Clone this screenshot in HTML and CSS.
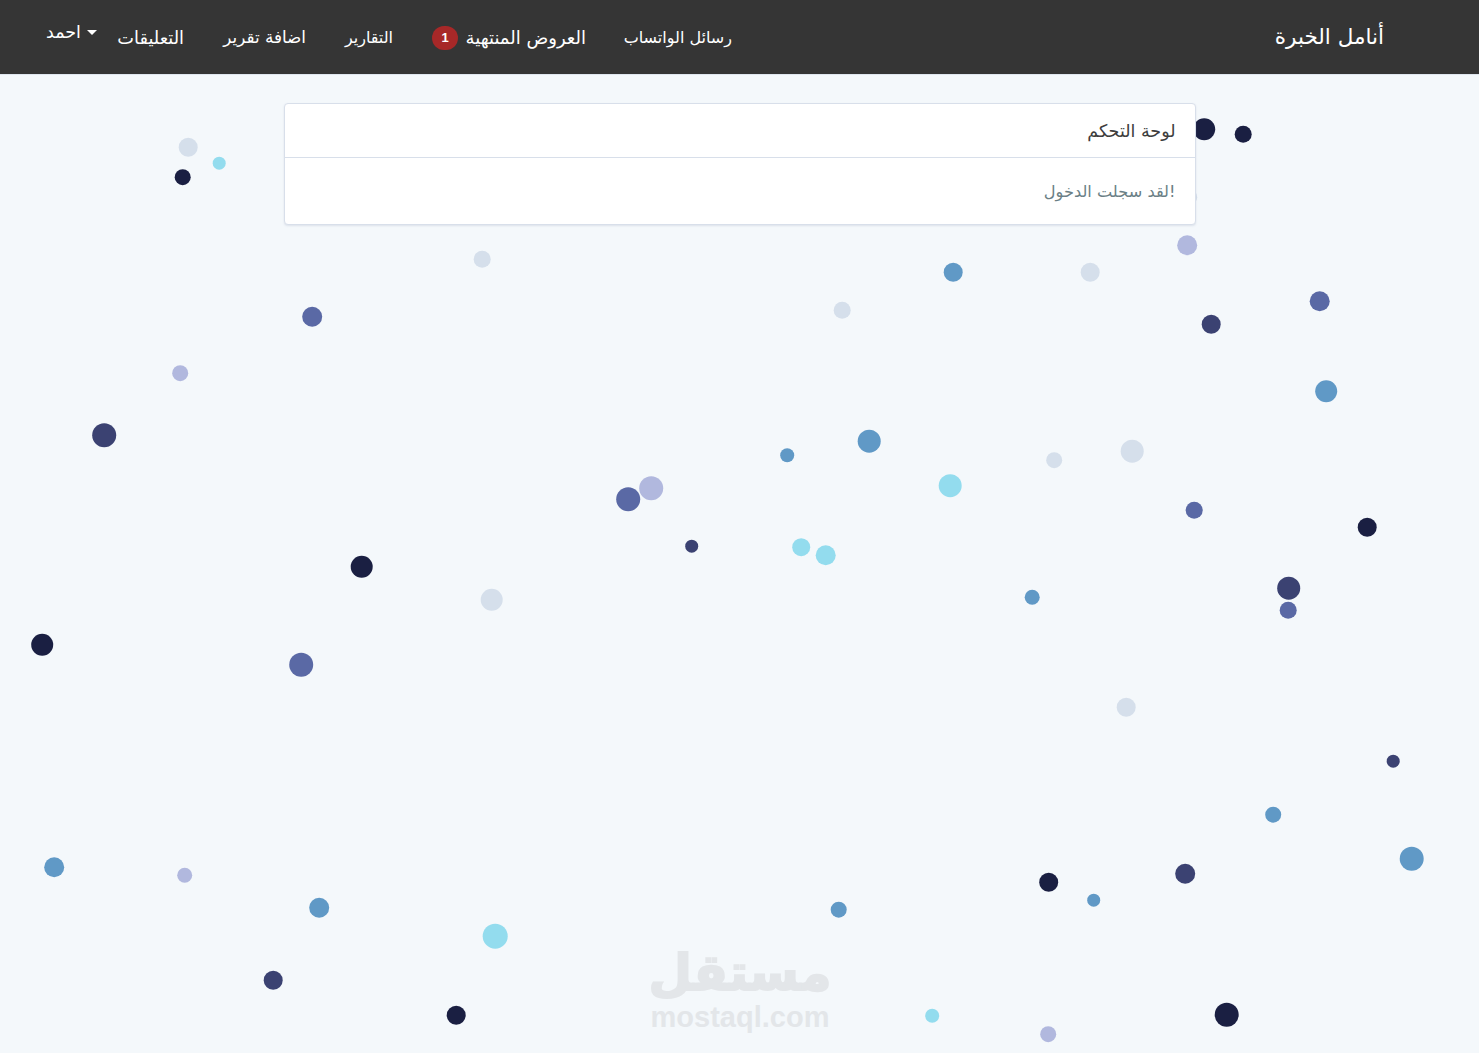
FILE: index.html
```html
<!DOCTYPE html>
<html lang="ar" dir="rtl">
<head>
<meta charset="utf-8">
<title>أنامل الخبرة</title>
<link rel="stylesheet" href="styles.css">
</head>
<body>
<svg class="particles" width="1479" height="1053" viewBox="-0.2 -0.2 1479 1053" aria-hidden="true">
<g class="dark"><circle cx="1204" cy="129" r="11"/><circle cx="1243" cy="134" r="8.5"/><circle cx="182.5" cy="177" r="8"/><circle cx="1367" cy="527" r="9.5"/><circle cx="361.5" cy="566.5" r="11"/><circle cx="42" cy="644.5" r="11"/><circle cx="1048.5" cy="882" r="9.5"/><circle cx="456" cy="1015" r="9.5"/><circle cx="1226.5" cy="1014.5" r="12"/></g>
<g class="navy"><circle cx="1211" cy="324" r="9.5"/><circle cx="104" cy="435" r="12"/><circle cx="691.5" cy="546" r="6.5"/><circle cx="1288.5" cy="588" r="11.5"/><circle cx="1393" cy="761" r="6.5"/><circle cx="1185" cy="873.5" r="10"/><circle cx="273" cy="980" r="9.5"/></g>
<g class="blue"><circle cx="1319.5" cy="301" r="10"/><circle cx="312" cy="316.5" r="10"/><circle cx="628" cy="499" r="12"/><circle cx="1194" cy="510" r="8.5"/><circle cx="1288" cy="610" r="8.5"/><circle cx="301" cy="664.5" r="12"/></g>
<g class="steel"><circle cx="953" cy="272" r="9.5"/><circle cx="1326" cy="391" r="11"/><circle cx="869" cy="441" r="11.5"/><circle cx="787" cy="455" r="7"/><circle cx="1032" cy="597" r="7.5"/><circle cx="1273" cy="814.5" r="8"/><circle cx="1411.5" cy="858.5" r="12"/><circle cx="54" cy="867" r="10"/><circle cx="1093.5" cy="900" r="6.5"/><circle cx="319" cy="907.5" r="10"/><circle cx="838.5" cy="909.5" r="8"/></g>
<g class="cyan"><circle cx="219" cy="163" r="6.5"/><circle cx="950" cy="485.5" r="11.5"/><circle cx="801" cy="547" r="9"/><circle cx="825.5" cy="555" r="10"/><circle cx="495" cy="936" r="12.5"/><circle cx="932" cy="1015.5" r="7"/></g>
<g class="lav"><circle cx="1187" cy="245" r="10"/><circle cx="180" cy="373" r="8"/><circle cx="651" cy="488" r="12"/><circle cx="184.5" cy="875" r="7.5"/><circle cx="1048" cy="1034" r="8"/></g>
<g class="light"><circle cx="188" cy="147" r="9.5"/><circle cx="482" cy="259" r="8.5"/><circle cx="1090" cy="272" r="9.5"/><circle cx="842" cy="310" r="8.5"/><circle cx="1054" cy="460" r="8"/><circle cx="1132" cy="451" r="11.5"/><circle cx="491.5" cy="599.5" r="11"/><circle cx="1126" cy="707" r="9.5"/><circle cx="1189" cy="197" r="8"/></g>
</svg>
<nav class="navbar">
  <a class="brand" href="#">أنامل الخبرة</a>
  <ul class="nav-links">
    <li><a href="#">رسائل الواتساب</a></li>
    <li class="offers"><a class="offers-link" href="#"><span>العروض المنتهية</span><span class="badge">1</span></a></li>
    <li><a href="#">التقارير</a></li>
    <li class="add-report"><a href="#">اضافة تقرير</a></li>
    <li class="comments"><a href="#">التعليقات</a></li>
    <li class="user"><a class="user-link" href="#"><span>احمد</span><span class="caret"></span></a></li>
  </ul>
</nav>
<main class="content">
  <section class="card">
    <header class="card-header">لوحة التحكم</header>
    <div class="card-body">لقد سجلت الدخول!</div>
  </section>
</main>
<div class="watermark">
  <span class="wm-ar">مستقل</span>
  <span class="wm-en">mostaql.com</span>
</div>
</body>
</html>
```
FILE: styles.css
```css
* { box-sizing: border-box; }
html, body { margin: 0; height: 100%; }
body {
  height: 1053px;
  overflow: hidden;
  position: relative;
  background: #f4f8fb;
  font-family: "DejaVu Sans", "Noto Sans", sans-serif;
  font-size: 16px;
  color: #212529;
}
a { color: inherit; text-decoration: none; }
.particles { position: absolute; top: 0; left: 0; }
.dark { fill: #1a1f42; }
.navy { fill: #3b4272; }
.blue { fill: #5a69a5; }
.steel { fill: #6099c6; }
.cyan { fill: #93dcee; }
.lav { fill: #b1b8de; }
.light { fill: #d5dfeb; }
.navbar {
  position: relative;
  height: 75px;
  background: #353535;
  border-bottom: 1px solid #dfe6ee;
  display: flex;
  align-items: center;
  justify-content: space-between;
  padding: 0 95px 0 46px;
  color: #fff;
}
.brand { font-size: 21.5px; margin-top: -2px; }
.nav-links {
  list-style: none;
  display: grid;
  grid-template-columns: 107px 154px 48px 83px 67px 32px;
  align-items: center;
  gap: 39px;
  margin: 0;
  padding: 0;
  font-size: 16px;
  white-space: nowrap;
}
.offers-link { display: flex; align-items: center; justify-content: space-between; }
.offers { font-size: 18px; }
.add-report { font-size: 16.8px; }
.comments { font-size: 17.8px; }
.user { font-size: 17.5px; margin-top: -10px; margin-right: -20px; }
.user-link { display: flex; direction: ltr; align-items: center; gap: 6px; }
.badge {
  width: 26px;
  height: 24px;
  margin-top: 2px;
  border-radius: 12px;
  background: #a72828;
  color: #fff;
  text-align: center;
  font: bold 13px/24px "Liberation Sans", sans-serif;
}
.caret {
  border-top: 5px solid #fff;
  border-left: 5px solid transparent;
  border-right: 5px solid transparent;
}
.content {
  position: relative;
  width: 912px;
  margin: 28px auto 0;
}
.card {
  background: #fff;
  border: 1px solid #d8dfea;
  border-radius: 4px;
  box-shadow: 0 1px 2px rgba(150, 165, 190, 0.25);
}
.card-header {
  height: 54px;
  line-height: 54px;
  padding: 0 19px;
  border-bottom: 1px solid #d8dfea;
  font-size: 17.5px;
  color: #3d3d3d;
}
.card-body {
  height: 66px;
  padding: 24px 19px 0;
  direction: ltr;
  text-align: right;
  color: #6b7f86;
  font-size: 16.2px;
}
.watermark {
  position: absolute;
  left: 650px;
  top: 945px;
  width: 180px;
  display: flex;
  flex-direction: column;
  align-items: center;
  color: #e3e6e9;
  font-weight: bold;
}
.wm-ar { font-size: 50px; line-height: 57px; -webkit-text-stroke: 2px #e3e6e9; }
.wm-en { font: bold 29px/30px "Liberation Sans", sans-serif; }
```
